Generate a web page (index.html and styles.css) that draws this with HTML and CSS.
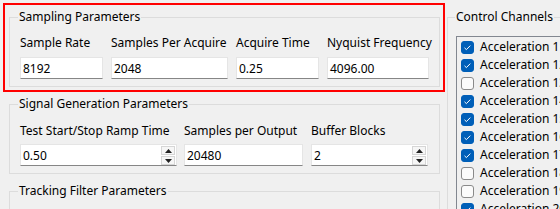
FILE: index.html
```html
<!DOCTYPE html>
<html lang="en">

<head>
  <meta charset="UTF-8" />
  <title>Acquisition Settings</title>
  <link rel="stylesheet" href="styles.css">
</head>

<body>
  <div class="window">
    <div class="left">
      <div class="highlight">
        <fieldset class="group sampling">
          <legend>Sampling Parameters</legend>
          <div class="fields">
            <div class="field">
              <label>Sample Rate</label>
              <div class="edit">8192</div>
            </div>
            <div class="field">
              <label>Samples Per Acquire</label>
              <div class="edit">2048</div>
            </div>
            <div class="field">
              <label>Acquire Time</label>
              <div class="edit">0.25</div>
            </div>
            <div class="field">
              <label>Nyquist Frequency</label>
              <div class="edit">4096.00</div>
            </div>
          </div>
        </fieldset>
      </div>

      <fieldset class="group signal">
        <legend>Signal Generation Parameters</legend>
        <div class="fields">
          <div class="field">
            <label>Test Start/Stop Ramp Time</label>
            <div class="edit spin">
              <span class="value">0.50</span>
              <div class="spin-btns">
                <span class="spin-btn"><svg width="7" height="4" viewBox="0 0 7 4"><path d="M0 4L3.5 0L7 4Z" fill="#222"/></svg></span>
                <span class="spin-btn"><svg width="7" height="4" viewBox="0 0 7 4"><path d="M0 0L3.5 4L7 0Z" fill="#222"/></svg></span>
              </div>
            </div>
          </div>
          <div class="field">
            <label>Samples per Output</label>
            <div class="edit">20480</div>
          </div>
          <div class="field">
            <label>Buffer Blocks</label>
            <div class="edit spin">
              <span class="value">2</span>
              <div class="spin-btns">
                <span class="spin-btn"><svg width="7" height="4" viewBox="0 0 7 4"><path d="M0 4L3.5 0L7 4Z" fill="#222"/></svg></span>
                <span class="spin-btn"><svg width="7" height="4" viewBox="0 0 7 4"><path d="M0 0L3.5 4L7 0Z" fill="#222"/></svg></span>
              </div>
            </div>
          </div>
        </div>
      </fieldset>

      <fieldset class="group tracking">
        <legend>Tracking Filter Parameters</legend>
        <div class="tracking-row">
          <div class="box wide"></div>
          <div class="box narrow"></div>
        </div>
      </fieldset>
    </div>

    <fieldset class="group channels">
      <legend>Control Channels</legend>
      <div class="listbox">
        <div class="row"><span class="check on"></span>Acceleration 11</div>
        <div class="row"><span class="check on"></span>Acceleration 12</div>
        <div class="row"><span class="check"></span>Acceleration 13</div>
        <div class="row"><span class="check on"></span>Acceleration 14</div>
        <div class="row"><span class="check on"></span>Acceleration 15</div>
        <div class="row"><span class="check on"></span>Acceleration 16</div>
        <div class="row"><span class="check on"></span>Acceleration 17</div>
        <div class="row"><span class="check"></span>Acceleration 18</div>
        <div class="row"><span class="check"></span>Acceleration 19</div>
        <div class="row"><span class="check on"></span>Acceleration 20</div>
      </div>
    </fieldset>
  </div>
</body>

</html>
```

FILE: styles.css
```css
html,
body {
  margin: 0;
  width: 560px;
  height: 209px;
  overflow: hidden;
}

body {
  font-family: "Noto Sans", "Open Sans", Arial, sans-serif;
  font-size: 12px;
  line-height: 16px;
  color: #000;
  background-color: #f0f0f0;
}

.window {
  display: flex;
  align-items: flex-start;
  gap: 2px;
  padding: 3px 0 0 3px;
  height: 206px;
  overflow: hidden;
}

.left {
  width: 442px;
  flex-shrink: 0;
}

.highlight {
  border: 2px solid #f00;
  padding: 4px 3px 3px 4px;
}

.group {
  margin: 0;
  min-width: 0;
  border: 1px solid #dcdcdc;
  padding: 11px 9px 7px 10px;
}

.group legend {
  margin-left: -2px;
  padding: 0 1px;
  line-height: 16px;
}

.sampling {
  padding-top: 10px;
}

.signal {
  margin: 4px 5px 0 6px;
}

.tracking {
  margin: 9px 5px 0 6px;
}

.fields {
  display: grid;
  column-gap: 8px;
}

.sampling .fields {
  grid-template-columns: 83px 117px 83px 102px;
}

.signal .fields {
  grid-template-columns: 157px 119px 118px;
  column-gap: 7px;
}

.signal .fields .field:last-child {
  margin-left: 1px;
}

.field {
  display: flex;
  flex-direction: column;
  gap: 6px;
}

.signal .field {
  gap: 5px;
}

.field label {
  white-space: nowrap;
}

.edit {
  box-sizing: border-box;
  height: 22px;
  background: #fff;
  border: 1px solid #e5e5e5;
  border-bottom-color: #868686;
  padding: 2px 2px 0 2px;
  line-height: 18px;
}

.spin {
  display: flex;
  justify-content: space-between;
  padding-right: 1px;
}

.spin-btns {
  display: flex;
  flex-direction: column;
  gap: 1px;
  width: 14px;
  margin-top: -1px;
}

.spin-btn {
  box-sizing: border-box;
  height: 9px;
  display: flex;
  align-items: center;
  justify-content: center;
  background: #f6f6f6;
  border: 1px solid #d6d6d6;
}

.tracking-row {
  display: flex;
  gap: 68px;
  padding-left: 72px;
}

.box {
  height: 22px;
  box-sizing: border-box;
  border: 1px solid #dadada;
  background: #f3f3f3;
}

.box.wide {
  width: 198px;
}

.box.narrow {
  width: 69px;
}

.channels {
  width: 140px;
  flex-shrink: 0;
  margin-top: 6px;
  padding: 11px 0 0 8px;
  border-right: none;
}

.channels legend {
  margin-left: -1px;
}

.listbox {
  border: 1px solid #828790;
  border-right: none;
  background: #f0f0f0;
  padding: 1px 0 0 4px;
  height: 200px;
}

.row {
  display: flex;
  align-items: center;
  gap: 6px;
  height: 18px;
  white-space: nowrap;
}

.check {
  box-sizing: border-box;
  width: 13px;
  height: 13px;
  border: 1px solid #8a8a8a;
  border-radius: 3px;
  background: #fbfbfb;
  flex-shrink: 0;
}

.check.on {
  border-color: #005fb8;
  background: #005fb8 url("data:image/svg+xml,%3Csvg xmlns='http://www.w3.org/2000/svg' width='11' height='11'%3E%3Cpath d='M2.5 5.8L4.4 7.6L8.3 3.6' fill='none' stroke='white' stroke-width='1'/%3E%3C/svg%3E") center no-repeat;
}
```
